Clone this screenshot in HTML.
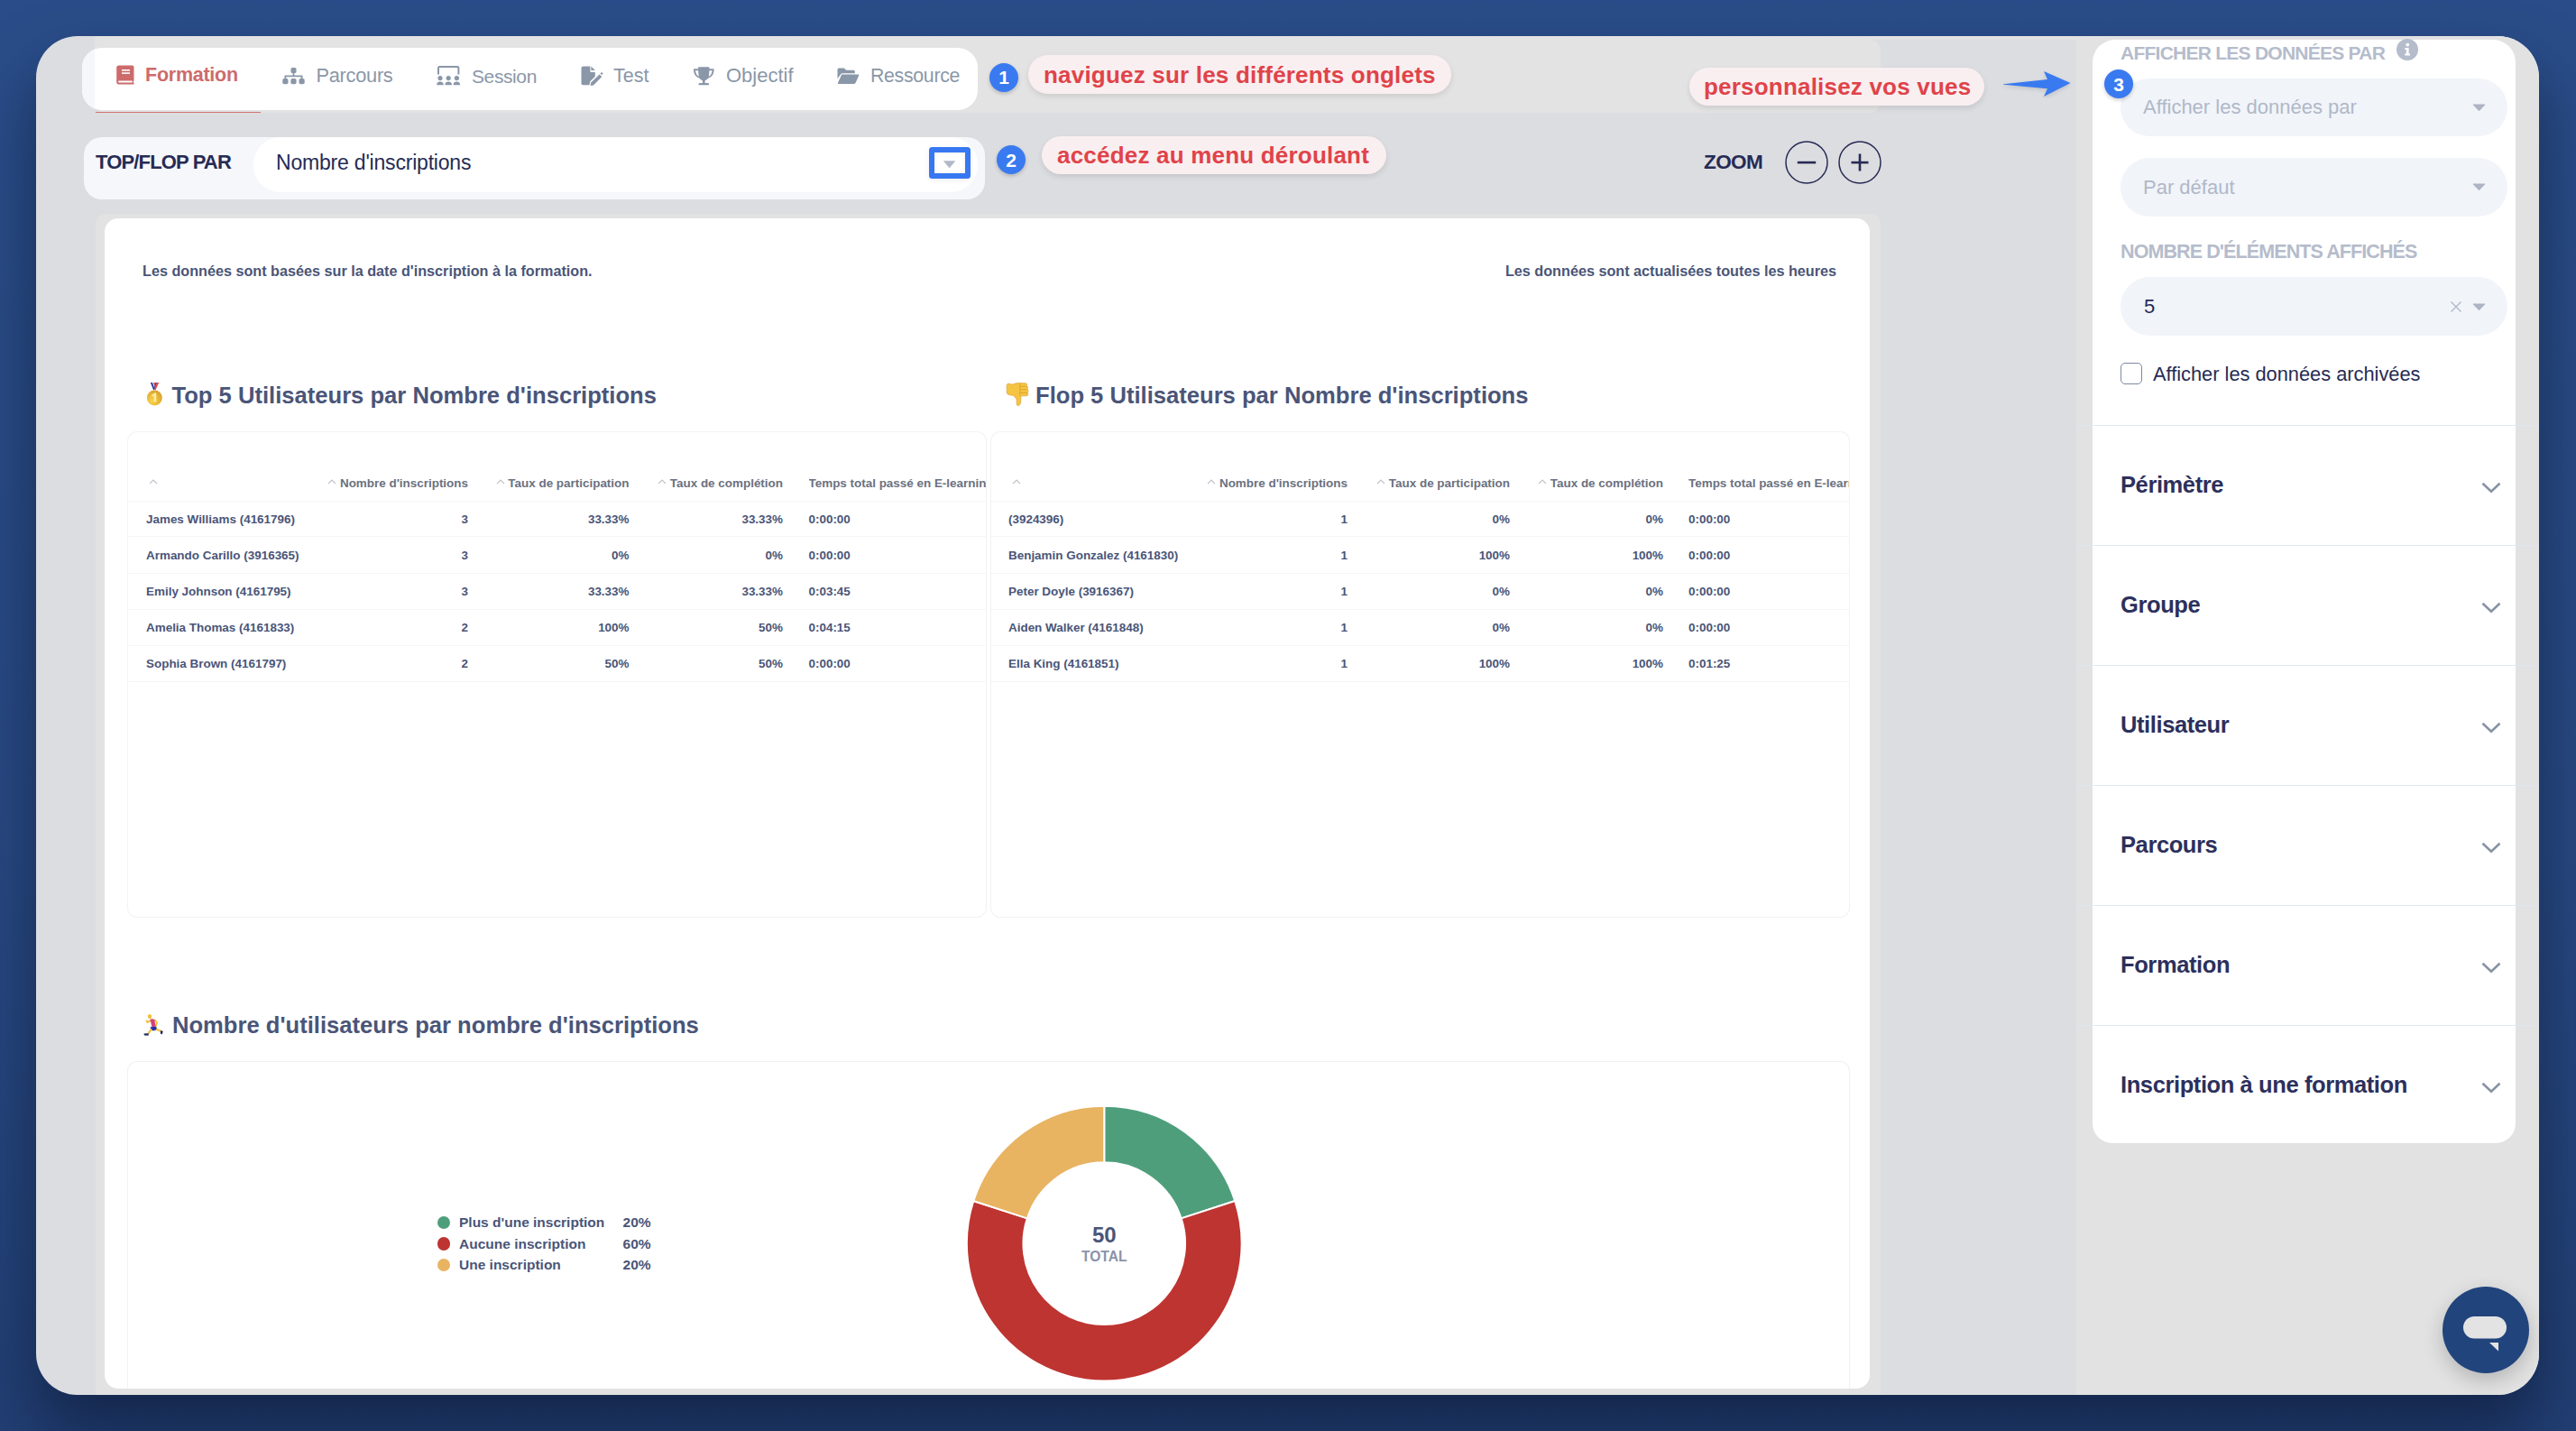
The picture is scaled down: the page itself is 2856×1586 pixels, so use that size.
<!DOCTYPE html>
<html><head><meta charset="utf-8">
<style>
*{margin:0;padding:0;box-sizing:border-box}
html,body{width:2856px;height:1586px;overflow:hidden}
body{background:#2a4c88;font-family:"Liberation Sans",sans-serif;position:relative}
.a{position:absolute}
.card{position:absolute;left:40px;top:40px;width:2775px;height:1506px;border-radius:46px;background:#dcdde0;overflow:hidden}
.stage{position:absolute;left:-40px;top:-40px;width:2856px;height:1586px}
.t{position:absolute;white-space:nowrap;line-height:1}
</style></head>
<body>
<div class="a" style="left:0;top:0;width:2856px;height:1586px;background:linear-gradient(180deg,#2a4d89 0%,#284983 60%,#223f74 100%)"></div>
<div class="a" style="left:40px;top:40px;width:2775px;height:1506px;border-radius:46px;box-shadow:0 40px 70px 0 rgba(6,14,34,.5)"></div>
<div class="card"><div class="stage">
<div class="a" style="left:105px;top:40px;width:2710px;height:4px;background:#e3e3e4"></div>
<div class="a" style="left:105px;top:44px;width:1980px;height:81px;background:#e3e3e4;border-radius:0 12px 12px 12px"></div>
<div class="a" style="left:2302px;top:40px;width:513px;height:1506px;background:#e2e2e3"></div>
<div class="a" style="left:106px;top:237px;width:1979px;height:1320px;background:#e2e2e3;border-radius:12px"></div>
<div class="a" style="left:116px;top:242px;width:1957px;height:1297px;background:#fff;border-radius:15px"></div>
<div class="a" style="left:91px;top:53px;width:993px;height:69px;background:#fff;border-radius:22px;overflow:hidden"><div class="a" style="left:0;top:0;width:14px;height:69px;background:#f5f7fb"></div></div>
<div class="a" style="left:106px;top:124px;width:183px;height:1px;background:#d57370"></div>
<!-- book -->
<svg class="a" style="left:129px;top:72px" width="20" height="22" viewBox="0 0 20 22"><path d="M3 0.5H17.5A2 2 0 0 1 19.5 2.5V16.5Q19.5 17.5 18.8 18V19.6H19.5V21.6H3A2.8 2.8 0 0 1 0.2 18.8V3.3A2.8 2.8 0 0 1 3 0.5Z" fill="#cd6b6b"/><rect x="6" y="5" width="9" height="1.6" fill="#fff"/><rect x="6" y="8.3" width="9" height="1.6" fill="#fff"/><path d="M3.2 17.4H17.6V19.6H3.2A1.1 1.1 0 0 1 3.2 17.4Z" fill="#fff"/></svg>
<!-- sitemap -->
<svg class="a" style="left:313px;top:75px" width="25" height="19" viewBox="0 0 25 19"><rect x="9.5" y="0" width="6" height="6" rx="1.5" fill="#8a97a8"/><rect x="11.6" y="5" width="1.8" height="4.5" fill="#8a97a8"/><path d="M3.4 13V9.4H21.6V13" stroke="#8a97a8" stroke-width="1.8" fill="none"/><rect x="0.3" y="12" width="6.2" height="6.2" rx="1.8" fill="#8a97a8"/><rect x="9.4" y="12" width="6.2" height="6.2" rx="1.8" fill="#8a97a8"/><rect x="18.5" y="12" width="6.2" height="6.2" rx="1.8" fill="#8a97a8"/></svg>
<!-- session -->
<svg class="a" style="left:484px;top:73px" width="27" height="22" viewBox="0 0 27 22"><path d="M2 9.5V2.5A1.6 1.6 0 0 1 3.6 0.9H22.8A1.6 1.6 0 0 1 24.4 2.5V9.5" stroke="#8a97a8" stroke-width="2" fill="none"/><circle cx="4" cy="13.6" r="2.6" fill="#8a97a8"/><circle cx="13.2" cy="13.6" r="2.6" fill="#8a97a8"/><circle cx="22.4" cy="13.6" r="2.6" fill="#8a97a8"/><path d="M0.2 21.2Q0.2 17.6 4 17.6Q7.8 17.6 7.8 21.2Z" fill="#8a97a8"/><path d="M9.4 21.2Q9.4 17.6 13.2 17.6Q17 17.6 17 21.2Z" fill="#8a97a8"/><path d="M18.6 21.2Q18.6 17.6 22.4 17.6Q26.2 17.6 26.2 21.2Z" fill="#8a97a8"/></svg>
<!-- file pen -->
<svg class="a" style="left:644px;top:73px" width="25" height="22" viewBox="0 0 25 22"><path d="M2.5 0.6H10.4V6.2Q10.4 7 11.2 7H15.8V11.8L10.3 17.3L9.4 21.3H2.5A2 2 0 0 1 0.5 19.3V2.6A2 2 0 0 1 2.5 0.6Z" fill="#8a97a8"/><path d="M11.4 0.6L15.8 5H11.4Z" fill="#8a97a8"/><path d="M20.6 9.4L23.3 12.1L14 21.4L10.6 21.9L11.2 18.6Z" fill="#8a97a8"/><path d="M21.4 8.6L22.4 7.6Q23.2 6.8 24 7.6Q24.8 8.4 24 9.2L23.1 10.1Z" fill="#8a97a8"/></svg>
<!-- trophy -->
<svg class="a" style="left:768px;top:73px" width="25" height="22" viewBox="0 0 25 22"><path d="M6.2 1.3H18.4V3.3H23.6Q24 11.5 17.2 13.8Q15.6 15.6 13.6 16.4V18.9H16.8Q18 18.9 18 20.1V21.2H6.6V20.1Q6.6 18.9 7.8 18.9H11V16.4Q9 15.6 7.4 13.8Q0.6 11.5 1 3.3H6.2Z M3 5.2Q3.4 10 6.9 11.8Q6.2 8.6 6.2 5.2Z M21.6 5.2H18.4Q18.4 8.6 17.7 11.8Q21.2 10 21.6 5.2Z" fill="#8a97a8" fill-rule="evenodd"/></svg>
<!-- folder open -->
<svg class="a" style="left:928px;top:75px" width="25" height="19" viewBox="0 0 25 19"><path d="M0.5 12.2V2Q0.5 0.5 2 0.5H7.8L10.2 2.7H18.4Q19.8 2.7 19.8 4.2V6.2H6Q4.6 6.2 4 7.4Z" fill="#8a97a8"/><path d="M5.2 7.4H23.2Q24.8 7.4 24.2 8.8L20.6 16.8Q20 18 18.6 18H1.6Q0.4 18 0.9 16.9Z" fill="#8a97a8"/></svg>


<div class="t" style="left:161px;top:72.6px;font-size:21.5px;font-weight:700;color:#cd6b6b;letter-spacing:-0.25px">Formation</div>
<div class="t" style="left:350.5px;top:73.45px;font-size:21.8px;color:#8a97a8;letter-spacing:-0.28px">Parcours</div>
<div class="t" style="left:523px;top:73.92px;font-size:21px;color:#8a97a8;letter-spacing:-0.4px">Session</div>
<div class="t" style="left:680px;top:73.5px;font-size:21.5px;color:#8a97a8;">Test</div>
<div class="t" style="left:805px;top:73.08px;font-size:22px;color:#8a97a8;">Objectif</div>
<div class="t" style="left:965px;top:73.67px;font-size:21.3px;color:#8a97a8;letter-spacing:-0.3px">Ressource</div>
<div class="a" style="left:1097px;top:69.6px;width:32px;height:32px;border-radius:50%;background:#3a7af0;box-shadow:0 2px 4px rgba(0,0,0,.2)"></div>
<div class="t" style="left:813px;width:600px;text-align:center;top:75.42px;font-size:21px;font-weight:700;color:#fff;">1</div>
<div class="a" style="left:1140px;top:61px;width:469px;height:43px;border-radius:21.5px;background:#f9eff0;box-shadow:0 3px 6px rgba(0,0,0,.10)"></div>
<div class="t" style="left:1157px;top:69.89px;font-size:26px;font-weight:700;color:#e0434a;letter-spacing:0.2px">naviguez sur les différents onglets</div>
<div class="a" style="left:1105px;top:161px;width:32px;height:32px;border-radius:50%;background:#3a7af0;box-shadow:0 2px 4px rgba(0,0,0,.2)"></div>
<div class="t" style="left:821px;width:600px;text-align:center;top:166.82px;font-size:21px;font-weight:700;color:#fff;">2</div>
<div class="a" style="left:1155px;top:151px;width:382px;height:42px;border-radius:21.0px;background:#f9eff0;box-shadow:0 3px 6px rgba(0,0,0,.10)"></div>
<div class="t" style="left:1172px;top:159.19px;font-size:26px;font-weight:700;color:#e0434a;letter-spacing:0.2px">accédez au menu déroulant</div>
<div class="a" style="left:1873px;top:75px;width:327px;height:42px;border-radius:21.0px;background:#f9eff0;box-shadow:0 3px 6px rgba(0,0,0,.10)"></div>
<div class="t" style="left:1889px;top:83.19px;font-size:26px;font-weight:700;color:#e0434a;letter-spacing:0.2px">personnalisez vos vues</div>
<svg class="a" style="left:2218px;top:77px" width="82" height="32" viewBox="0 0 82 32"><path d="M3 16.2L52 10.9L48 2L77.6 15L48 30L52 21.2L3 16.8Z" fill="#3a7af0" style="filter:drop-shadow(0 2px 2px rgba(0,0,0,.12))"/></svg>
<div class="a" style="left:93px;top:152px;width:998.5px;height:69px;background:#f5f7fb;border-radius:20px"></div>
<div class="t" style="left:106px;top:169.38px;font-size:22px;font-weight:700;color:#262b54;letter-spacing:-0.85px">TOP/FLOP PAR</div>
<div class="a" style="left:281px;top:151.5px;width:802.5px;height:61.5px;background:#fff;border-radius:30px"></div>
<div class="t" style="left:306px;top:168.83px;font-size:23px;color:#262b54;letter-spacing:-0.2px">Nombre d'inscriptions</div>
<div class="a" style="left:1030px;top:163px;width:46px;height:35px;border:6px solid #3778f2;border-radius:3.5px;background:#fff;box-shadow:inset 0 0 4px rgba(0,0,0,.08), 0 2px 6px rgba(0,0,0,.06)"></div>
<svg class="a" style="left:1046px;top:177.5px" width="13" height="9" viewBox="0 0 13 9"><path d="M0.4 0.6H12.8L6.6 8Z" fill="#b1b9c8" stroke="#b1b9c8" stroke-width=".6" stroke-linejoin="round"/></svg>
<div class="t" style="left:1889px;top:168.95px;font-size:22.5px;font-weight:700;color:#262b54;letter-spacing:-0.6px">ZOOM</div>
<svg class="a" style="left:1978px;top:155px" width="110" height="50" viewBox="0 0 110 50"><circle cx="25" cy="25" r="23" fill="none" stroke="#262b54" stroke-width="1.5"/><rect x="14.8" y="23.8" width="20.4" height="2.6" fill="#262b54"/><circle cx="84" cy="25" r="23" fill="none" stroke="#262b54" stroke-width="1.5"/><rect x="74.5" y="23.8" width="19" height="2.6" fill="#262b54"/><rect x="82.7" y="15.5" width="2.6" height="19" fill="#262b54"/></svg>
<div class="a" style="left:116px;top:242px;width:1957px;height:1297px;overflow:hidden;border-radius:15px"><div class="a" style="left:-116px;top:-242px;width:2856px;height:1586px">
<div class="t" style="left:158px;top:291.79px;font-size:16.2px;font-weight:700;color:#4a5578;">Les données sont basées sur la date d'inscription à la formation.</div>
<div class="t" style="right:820px;top:291.79px;font-size:16.2px;font-weight:700;color:#4a5578;">Les données sont actualisées toutes les heures</div>
<div class="t" style="left:190.5px;top:425.83px;font-size:25.6px;font-weight:700;color:#4a5578;">Top 5 Utilisateurs par Nombre d'inscriptions</div>
<div class="t" style="left:1148px;top:425.83px;font-size:25.6px;font-weight:700;color:#4a5578;">Flop 5 Utilisateurs par Nombre d'inscriptions</div>
<div class="t" style="left:191px;top:1124.33px;font-size:25.6px;font-weight:700;color:#4a5578;">Nombre d'utilisateurs par nombre d'inscriptions</div>
<div class="a" style="left:142px;top:479px;width:951px;height:537px;border-radius:10px;background:#fff;box-shadow:0 0 0 1px #f2f3f5, 0 1px 2px rgba(0,0,0,.03);overflow:hidden">
<div class="a" style="left:0;top:76px;width:951px;height:1px;background:#f6f6f8"></div>
<div class="a" style="left:0;top:115px;width:951px;height:1px;background:#f6f6f8"></div>
<div class="a" style="left:0;top:156px;width:951px;height:1px;background:#f6f6f8"></div>
<div class="a" style="left:0;top:196px;width:951px;height:1px;background:#f6f6f8"></div>
<div class="a" style="left:0;top:236px;width:951px;height:1px;background:#f6f6f8"></div>
<div class="a" style="left:0;top:276px;width:951px;height:1px;background:#f6f6f8"></div>
</div>
<div class="a" style="left:1099px;top:479px;width:951px;height:537px;border-radius:10px;background:#fff;box-shadow:0 0 0 1px #f2f3f5, 0 1px 2px rgba(0,0,0,.03);overflow:hidden">
<div class="a" style="left:0;top:76px;width:951px;height:1px;background:#f6f6f8"></div>
<div class="a" style="left:0;top:115px;width:951px;height:1px;background:#f6f6f8"></div>
<div class="a" style="left:0;top:156px;width:951px;height:1px;background:#f6f6f8"></div>
<div class="a" style="left:0;top:196px;width:951px;height:1px;background:#f6f6f8"></div>
<div class="a" style="left:0;top:236px;width:951px;height:1px;background:#f6f6f8"></div>
<div class="a" style="left:0;top:276px;width:951px;height:1px;background:#f6f6f8"></div>
</div>
<div class="t" style="right:2337px;top:528.61px;font-size:13.45px;font-weight:700;color:#6b7180;">Nombre d'inscriptions</div>
<div class="t" style="right:2158.5px;top:528.61px;font-size:13.45px;font-weight:700;color:#6b7180;">Taux de participation</div>
<div class="t" style="right:1988px;top:528.61px;font-size:13.45px;font-weight:700;color:#6b7180;">Taux de complétion</div>
<div class="a" style="left:896.5px;top:526.61px;width:196.5px;height:20px;overflow:hidden"><div class="t" style="left:0;top:2px;font-size:13.45px;font-weight:700;color:#6b7180">Temps total passé en E-learning</div></div>
<svg class="a" style="left:165px;top:531px" width="10" height="6" viewBox="0 0 10 6"><path d="M1 5L5 1L9 5" stroke="#bfc3ca" stroke-width="1.1" fill="none"/></svg>
<svg class="a" style="left:363px;top:531px" width="10" height="6" viewBox="0 0 10 6"><path d="M1 5L5 1L9 5" stroke="#bfc3ca" stroke-width="1.1" fill="none"/></svg>
<svg class="a" style="left:550px;top:531px" width="10" height="6" viewBox="0 0 10 6"><path d="M1 5L5 1L9 5" stroke="#bfc3ca" stroke-width="1.1" fill="none"/></svg>
<svg class="a" style="left:729px;top:531px" width="10" height="6" viewBox="0 0 10 6"><path d="M1 5L5 1L9 5" stroke="#bfc3ca" stroke-width="1.1" fill="none"/></svg>
<div class="t" style="left:162px;top:568.61px;font-size:13.45px;font-weight:700;color:#4a5578;">James Williams (4161796)</div>
<div class="t" style="right:2337px;top:568.61px;font-size:13.45px;font-weight:700;color:#4a5578;">3</div>
<div class="t" style="right:2158.5px;top:568.61px;font-size:13.45px;font-weight:700;color:#4a5578;">33.33%</div>
<div class="t" style="right:1988px;top:568.61px;font-size:13.45px;font-weight:700;color:#4a5578;">33.33%</div>
<div class="t" style="left:896.5px;top:568.61px;font-size:13.45px;font-weight:700;color:#4a5578;">0:00:00</div>
<div class="t" style="left:162px;top:608.61px;font-size:13.45px;font-weight:700;color:#4a5578;">Armando Carillo (3916365)</div>
<div class="t" style="right:2337px;top:608.61px;font-size:13.45px;font-weight:700;color:#4a5578;">3</div>
<div class="t" style="right:2158.5px;top:608.61px;font-size:13.45px;font-weight:700;color:#4a5578;">0%</div>
<div class="t" style="right:1988px;top:608.61px;font-size:13.45px;font-weight:700;color:#4a5578;">0%</div>
<div class="t" style="left:896.5px;top:608.61px;font-size:13.45px;font-weight:700;color:#4a5578;">0:00:00</div>
<div class="t" style="left:162px;top:648.61px;font-size:13.45px;font-weight:700;color:#4a5578;">Emily Johnson (4161795)</div>
<div class="t" style="right:2337px;top:648.61px;font-size:13.45px;font-weight:700;color:#4a5578;">3</div>
<div class="t" style="right:2158.5px;top:648.61px;font-size:13.45px;font-weight:700;color:#4a5578;">33.33%</div>
<div class="t" style="right:1988px;top:648.61px;font-size:13.45px;font-weight:700;color:#4a5578;">33.33%</div>
<div class="t" style="left:896.5px;top:648.61px;font-size:13.45px;font-weight:700;color:#4a5578;">0:03:45</div>
<div class="t" style="left:162px;top:688.61px;font-size:13.45px;font-weight:700;color:#4a5578;">Amelia Thomas (4161833)</div>
<div class="t" style="right:2337px;top:688.61px;font-size:13.45px;font-weight:700;color:#4a5578;">2</div>
<div class="t" style="right:2158.5px;top:688.61px;font-size:13.45px;font-weight:700;color:#4a5578;">100%</div>
<div class="t" style="right:1988px;top:688.61px;font-size:13.45px;font-weight:700;color:#4a5578;">50%</div>
<div class="t" style="left:896.5px;top:688.61px;font-size:13.45px;font-weight:700;color:#4a5578;">0:04:15</div>
<div class="t" style="left:162px;top:728.61px;font-size:13.45px;font-weight:700;color:#4a5578;">Sophia Brown (4161797)</div>
<div class="t" style="right:2337px;top:728.61px;font-size:13.45px;font-weight:700;color:#4a5578;">2</div>
<div class="t" style="right:2158.5px;top:728.61px;font-size:13.45px;font-weight:700;color:#4a5578;">50%</div>
<div class="t" style="right:1988px;top:728.61px;font-size:13.45px;font-weight:700;color:#4a5578;">50%</div>
<div class="t" style="left:896.5px;top:728.61px;font-size:13.45px;font-weight:700;color:#4a5578;">0:00:00</div>
<div class="t" style="right:1362px;top:528.61px;font-size:13.45px;font-weight:700;color:#6b7180;">Nombre d'inscriptions</div>
<div class="t" style="right:1182px;top:528.61px;font-size:13.45px;font-weight:700;color:#6b7180;">Taux de participation</div>
<div class="t" style="right:1012px;top:528.61px;font-size:13.45px;font-weight:700;color:#6b7180;">Taux de complétion</div>
<div class="a" style="left:1872px;top:526.61px;width:178px;height:20px;overflow:hidden"><div class="t" style="left:0;top:2px;font-size:13.45px;font-weight:700;color:#6b7180">Temps total passé en E-learning</div></div>
<svg class="a" style="left:1122px;top:531px" width="10" height="6" viewBox="0 0 10 6"><path d="M1 5L5 1L9 5" stroke="#bfc3ca" stroke-width="1.1" fill="none"/></svg>
<svg class="a" style="left:1338px;top:531px" width="10" height="6" viewBox="0 0 10 6"><path d="M1 5L5 1L9 5" stroke="#bfc3ca" stroke-width="1.1" fill="none"/></svg>
<svg class="a" style="left:1526px;top:531px" width="10" height="6" viewBox="0 0 10 6"><path d="M1 5L5 1L9 5" stroke="#bfc3ca" stroke-width="1.1" fill="none"/></svg>
<svg class="a" style="left:1705px;top:531px" width="10" height="6" viewBox="0 0 10 6"><path d="M1 5L5 1L9 5" stroke="#bfc3ca" stroke-width="1.1" fill="none"/></svg>
<div class="t" style="left:1118px;top:568.61px;font-size:13.45px;font-weight:700;color:#4a5578;">(3924396)</div>
<div class="t" style="right:1362px;top:568.61px;font-size:13.45px;font-weight:700;color:#4a5578;">1</div>
<div class="t" style="right:1182px;top:568.61px;font-size:13.45px;font-weight:700;color:#4a5578;">0%</div>
<div class="t" style="right:1012px;top:568.61px;font-size:13.45px;font-weight:700;color:#4a5578;">0%</div>
<div class="t" style="left:1872px;top:568.61px;font-size:13.45px;font-weight:700;color:#4a5578;">0:00:00</div>
<div class="t" style="left:1118px;top:608.61px;font-size:13.45px;font-weight:700;color:#4a5578;">Benjamin Gonzalez (4161830)</div>
<div class="t" style="right:1362px;top:608.61px;font-size:13.45px;font-weight:700;color:#4a5578;">1</div>
<div class="t" style="right:1182px;top:608.61px;font-size:13.45px;font-weight:700;color:#4a5578;">100%</div>
<div class="t" style="right:1012px;top:608.61px;font-size:13.45px;font-weight:700;color:#4a5578;">100%</div>
<div class="t" style="left:1872px;top:608.61px;font-size:13.45px;font-weight:700;color:#4a5578;">0:00:00</div>
<div class="t" style="left:1118px;top:648.61px;font-size:13.45px;font-weight:700;color:#4a5578;">Peter Doyle (3916367)</div>
<div class="t" style="right:1362px;top:648.61px;font-size:13.45px;font-weight:700;color:#4a5578;">1</div>
<div class="t" style="right:1182px;top:648.61px;font-size:13.45px;font-weight:700;color:#4a5578;">0%</div>
<div class="t" style="right:1012px;top:648.61px;font-size:13.45px;font-weight:700;color:#4a5578;">0%</div>
<div class="t" style="left:1872px;top:648.61px;font-size:13.45px;font-weight:700;color:#4a5578;">0:00:00</div>
<div class="t" style="left:1118px;top:688.61px;font-size:13.45px;font-weight:700;color:#4a5578;">Aiden Walker (4161848)</div>
<div class="t" style="right:1362px;top:688.61px;font-size:13.45px;font-weight:700;color:#4a5578;">1</div>
<div class="t" style="right:1182px;top:688.61px;font-size:13.45px;font-weight:700;color:#4a5578;">0%</div>
<div class="t" style="right:1012px;top:688.61px;font-size:13.45px;font-weight:700;color:#4a5578;">0%</div>
<div class="t" style="left:1872px;top:688.61px;font-size:13.45px;font-weight:700;color:#4a5578;">0:00:00</div>
<div class="t" style="left:1118px;top:728.61px;font-size:13.45px;font-weight:700;color:#4a5578;">Ella King (4161851)</div>
<div class="t" style="right:1362px;top:728.61px;font-size:13.45px;font-weight:700;color:#4a5578;">1</div>
<div class="t" style="right:1182px;top:728.61px;font-size:13.45px;font-weight:700;color:#4a5578;">100%</div>
<div class="t" style="right:1012px;top:728.61px;font-size:13.45px;font-weight:700;color:#4a5578;">100%</div>
<div class="t" style="left:1872px;top:728.61px;font-size:13.45px;font-weight:700;color:#4a5578;">0:01:25</div>
<div class="a" style="left:142px;top:1177px;width:1908px;height:420px;border-radius:10px;background:#fff;box-shadow:0 0 0 1px #f0f1f3, 0 1px 3px rgba(0,0,0,.04)"></div>
<div class="a" style="left:484.8px;top:1347.55px;width:14.4px;height:14.4px;border-radius:50%;background:#4f9e7b"></div>
<div class="t" style="left:509px;top:1346.93px;font-size:15.5px;font-weight:700;color:#4a5578;">Plus d'une inscription</div>
<div class="t" style="left:690.6px;top:1346.93px;font-size:15.5px;font-weight:700;color:#4a5578;">20%</div>
<div class="a" style="left:484.8px;top:1371.20px;width:14.4px;height:14.4px;border-radius:50%;background:#be3431"></div>
<div class="t" style="left:509px;top:1370.58px;font-size:15.5px;font-weight:700;color:#4a5578;">Aucune inscription</div>
<div class="t" style="left:690.6px;top:1370.58px;font-size:15.5px;font-weight:700;color:#4a5578;">60%</div>
<div class="a" style="left:484.8px;top:1394.85px;width:14.4px;height:14.4px;border-radius:50%;background:#e8b462"></div>
<div class="t" style="left:509px;top:1394.23px;font-size:15.5px;font-weight:700;color:#4a5578;">Une inscription</div>
<div class="t" style="left:690.6px;top:1394.23px;font-size:15.5px;font-weight:700;color:#4a5578;">20%</div>
<svg class="a" style="left:1060px;top:1214px" width="330" height="330" viewBox="1060 1214 330 330"><path d="M1224.25 1225.70A152.4 152.4 0 0 1 1369.19 1331.01L1309.65 1350.35A89.8 89.8 0 0 0 1224.25 1288.30Z" fill="#4f9e7b" stroke="#fff" stroke-width="2"/><path d="M1369.19 1331.01A152.4 152.4 0 1 1 1079.31 1331.01L1138.85 1350.35A89.8 89.8 0 1 0 1309.65 1350.35Z" fill="#be3431" stroke="#fff" stroke-width="2"/><path d="M1079.31 1331.01A152.4 152.4 0 0 1 1224.25 1225.70L1224.25 1288.30A89.8 89.8 0 0 0 1138.85 1350.35Z" fill="#e8b462" stroke="#fff" stroke-width="2"/></svg>
<div class="t" style="left:924.25px;width:600px;text-align:center;top:1357.18px;font-size:24px;font-weight:700;color:#4a5578;">50</div>
<div class="t" style="left:924.25px;width:600px;text-align:center;top:1384.79px;font-size:15.6px;font-weight:700;color:#8a93a8;">TOTAL</div>
<svg class="a" style="left:160px;top:422px" width="22" height="29" viewBox="160 422 22 29">
<defs><radialGradient id="gm" cx="0.35" cy="0.7" r="0.8"><stop offset="0" stop-color="#f7d54a"/><stop offset="0.6" stop-color="#e6b437"/><stop offset="1" stop-color="#d39a2a"/></radialGradient></defs>
<path d="M166.8 424L169 424L171.6 431.6L170.2 432.4Z" fill="#2e3aa0"/>
<path d="M170 424L172.4 424L171.8 430Z" fill="#e8574a"/>
<path d="M172.2 424L174.4 424L171.4 432L170.4 431.4Z" fill="#2e3aa0" opacity=".85"/>
<path d="M174 424L176.2 424L172.4 432.4L171.2 431.8Z" fill="#e8473f"/>
<circle cx="171.35" cy="440.9" r="8.5" fill="url(#gm)"/>
<path d="M168.4 437.6L171.6 435.4H173.2V445.6H170.6V438.8L168.4 439.8Z" fill="#fbeea6"/>
</svg>
<svg class="a" style="left:1114px;top:422px" width="28" height="30" viewBox="1114 422 28 30">
<path d="M1116.2 426.6Q1116.6 425 1118.6 425.2L1122.4 426.2Q1126 424.4 1129.6 424.6L1137.2 424.8Q1138.6 425 1138.6 426.4Q1138.6 427.4 1137.8 427.8Q1139.6 428 1139.6 429.8Q1139.6 431 1138.8 431.6Q1140 431.8 1140 433.6Q1140 434.8 1139 435.2Q1140 435.6 1139.8 437.2Q1139.6 438.8 1137.8 438.8H1132.2Q1131.6 440.6 1131.8 443.6Q1132 447.2 1130.4 448.8Q1128.6 450.6 1127.4 448.8Q1126.8 447.6 1127.2 445Q1127.6 442.6 1126.2 441.2L1123.6 438.4L1119 437.6Q1116.2 437.2 1116.2 435Z" fill="#f5c542" stroke="#dba030" stroke-width=".7"/>
<path d="M1130.8 428.2H1138M1131 431.8H1139M1131 435.4H1139" stroke="#d99a2b" stroke-width=".8" fill="none"/>
<path d="M1131 425.4L1130.6 438.6" stroke="#d99a2b" stroke-width=".7" fill="none"/>
</svg>
<svg class="a" style="left:158px;top:1122px" width="25" height="28" viewBox="158 1122 25 28">
<path d="M163.8 1125.2Q165.6 1123.6 167.6 1124.6Q168.6 1126.4 167.6 1128.4Q166 1129.6 164.6 1128.6Q163.4 1127 163.8 1125.2Z" fill="#f2bf35"/>
<path d="M166.8 1131.2L163.4 1133L162.6 1131.6" stroke="#f2c23a" stroke-width="2" fill="none" stroke-linecap="round" stroke-linejoin="round"/>
<path d="M171.4 1130.4L174.2 1133.4L172.6 1137" stroke="#f2c23a" stroke-width="1.9" fill="none" stroke-linecap="round" stroke-linejoin="round"/>
<path d="M166.4 1129.8Q169.2 1128.6 171.4 1130.2L172.4 1137.6L168.4 1138.2Z" fill="#d8407c"/>
<path d="M166.2 1138.4L172.8 1137.6L175 1141.2L169.2 1142.4Z" fill="#2733a8"/>
<path d="M167.8 1140.6L164.2 1145.8" stroke="#f2c23a" stroke-width="2.2" fill="none"/>
<path d="M173 1140.6L178.4 1143" stroke="#f2c23a" stroke-width="2.2" fill="none"/>
<path d="M159.4 1145.6L164.6 1145.2L164.6 1147.8L160 1147.4Z" fill="#1d2a5c"/>
<path d="M178.2 1141.8L180.8 1143.2L179.6 1146.6L177.8 1145.6Z" fill="#1d2a5c"/>
</svg>

</div></div>
<div class="a" style="left:2320px;top:44px;width:469px;height:1223px;background:#fff;border-radius:25px 25px 22px 22px"></div>
<div class="t" style="left:2351px;top:47.72px;font-size:21px;font-weight:700;color:#b5bccb;letter-spacing:-0.75px">AFFICHER LES DONNÉES PAR</div>
<svg class="a" style="left:2657px;top:43px" width="24" height="24" viewBox="0 0 24 24"><circle cx="12" cy="12" r="12" fill="#b5bccb"/><circle cx="12.3" cy="6.6" r="1.9" fill="#fff"/><path d="M9.4 10H13.6V16.6H15V18.6H9.2V16.6H10.8V12H9.4Z" fill="#fff"/></svg>
<div class="a" style="left:2351px;top:87px;width:429px;height:64px;background:#f1f4f9;border-radius:32.0px"></div>
<div class="t" style="left:2376px;top:108.18px;font-size:22px;color:#b0b8c8;">Afficher les données par</div>
<svg class="a" style="left:2741px;top:115.0px" width="15" height="9" viewBox="0 0 15 9"><path d="M1 1H14L7.5 7.8Z" fill="#adb5c3" stroke="#adb5c3" stroke-width="1" stroke-linejoin="round"/></svg>
<div class="a" style="left:2351px;top:175px;width:429px;height:64.5px;background:#f1f4f9;border-radius:32.25px"></div>
<div class="t" style="left:2376px;top:197.18px;font-size:22px;color:#b0b8c8;">Par défaut</div>
<svg class="a" style="left:2741px;top:203.2px" width="15" height="9" viewBox="0 0 15 9"><path d="M1 1H14L7.5 7.8Z" fill="#adb5c3" stroke="#adb5c3" stroke-width="1" stroke-linejoin="round"/></svg>
<div class="t" style="left:2351px;top:269.3px;font-size:21.5px;font-weight:700;color:#b5bccb;letter-spacing:-0.9px">NOMBRE D'ÉLÉMENTS AFFICHÉS</div>
<div class="a" style="left:2351px;top:307px;width:429px;height:65px;background:#f1f4f9;border-radius:32.5px"></div>
<div class="t" style="left:2377px;top:328.68px;font-size:22px;color:#262b54;">5</div>
<svg class="a" style="left:2741px;top:335.5px" width="15" height="9" viewBox="0 0 15 9"><path d="M1 1H14L7.5 7.8Z" fill="#adb5c3" stroke="#adb5c3" stroke-width="1" stroke-linejoin="round"/></svg>
<svg class="a" style="left:2716px;top:332.5px" width="14" height="14" viewBox="0 0 14 14"><path d="M1.5 1.5L12.5 12.5M12.5 1.5L1.5 12.5" stroke="#b0b8c8" stroke-width="1.4"/></svg>
<div class="a" style="left:2351px;top:402px;width:24px;height:24px;border:1.5px solid #7d89a3;border-radius:5px;background:#fff"></div>
<div class="t" style="left:2387px;top:404.05px;font-size:21.8px;color:#262b54;">Afficher les données archivées</div>
<div class="a" style="left:2302px;top:471px;width:513px;height:1px;background:#e1e7ef"></div>
<div class="a" style="left:2302px;top:604px;width:513px;height:1px;background:#e1e7ef"></div>
<div class="a" style="left:2302px;top:737px;width:513px;height:1px;background:#e1e7ef"></div>
<div class="a" style="left:2302px;top:870px;width:513px;height:1px;background:#e1e7ef"></div>
<div class="a" style="left:2302px;top:1003px;width:513px;height:1px;background:#e1e7ef"></div>
<div class="a" style="left:2302px;top:1136px;width:513px;height:1px;background:#e1e7ef"></div>
<div class="t" style="left:2351px;top:524.91px;font-size:25.5px;font-weight:700;color:#2c305c;letter-spacing:-0.4px">Périmètre</div>
<svg class="a" style="left:2751px;top:534px" width="22" height="13" viewBox="0 0 22 13"><path d="M1.5 1.8L11 10.8L20.5 1.8" stroke="#8793a3" stroke-width="2.6" fill="none"/></svg>
<div class="t" style="left:2351px;top:657.91px;font-size:25.5px;font-weight:700;color:#2c305c;letter-spacing:-0.4px">Groupe</div>
<svg class="a" style="left:2751px;top:667px" width="22" height="13" viewBox="0 0 22 13"><path d="M1.5 1.8L11 10.8L20.5 1.8" stroke="#8793a3" stroke-width="2.6" fill="none"/></svg>
<div class="t" style="left:2351px;top:790.91px;font-size:25.5px;font-weight:700;color:#2c305c;letter-spacing:-0.4px">Utilisateur</div>
<svg class="a" style="left:2751px;top:800px" width="22" height="13" viewBox="0 0 22 13"><path d="M1.5 1.8L11 10.8L20.5 1.8" stroke="#8793a3" stroke-width="2.6" fill="none"/></svg>
<div class="t" style="left:2351px;top:923.91px;font-size:25.5px;font-weight:700;color:#2c305c;letter-spacing:-0.4px">Parcours</div>
<svg class="a" style="left:2751px;top:933px" width="22" height="13" viewBox="0 0 22 13"><path d="M1.5 1.8L11 10.8L20.5 1.8" stroke="#8793a3" stroke-width="2.6" fill="none"/></svg>
<div class="t" style="left:2351px;top:1056.91px;font-size:25.5px;font-weight:700;color:#2c305c;letter-spacing:-0.4px">Formation</div>
<svg class="a" style="left:2751px;top:1066px" width="22" height="13" viewBox="0 0 22 13"><path d="M1.5 1.8L11 10.8L20.5 1.8" stroke="#8793a3" stroke-width="2.6" fill="none"/></svg>
<div class="t" style="left:2351px;top:1189.91px;font-size:25.5px;font-weight:700;color:#2c305c;letter-spacing:-0.4px">Inscription à une formation</div>
<svg class="a" style="left:2751px;top:1199px" width="22" height="13" viewBox="0 0 22 13"><path d="M1.5 1.8L11 10.8L20.5 1.8" stroke="#8793a3" stroke-width="2.6" fill="none"/></svg>
<div class="a" style="left:2333px;top:77px;width:32px;height:32px;border-radius:50%;background:#3a7af0;box-shadow:0 2px 4px rgba(0,0,0,.2)"></div>
<div class="t" style="left:2049px;width:600px;text-align:center;top:82.82px;font-size:21px;font-weight:700;color:#fff;">3</div>
</div></div>
<div class="a" style="left:2708px;top:1426px;width:96px;height:96px;border-radius:50%;background:#22447c;box-shadow:0 8px 22px rgba(0,0,0,.2)"></div>
<svg class="a" style="left:2728px;top:1455px" width="56" height="45" viewBox="0 0 56 45"><rect x="3" y="4" width="48" height="24.5" rx="12.25" fill="#e3e3e4"/><path d="M32 33H42V42.5Z" fill="#e3e3e4"/></svg>
</body></html>
